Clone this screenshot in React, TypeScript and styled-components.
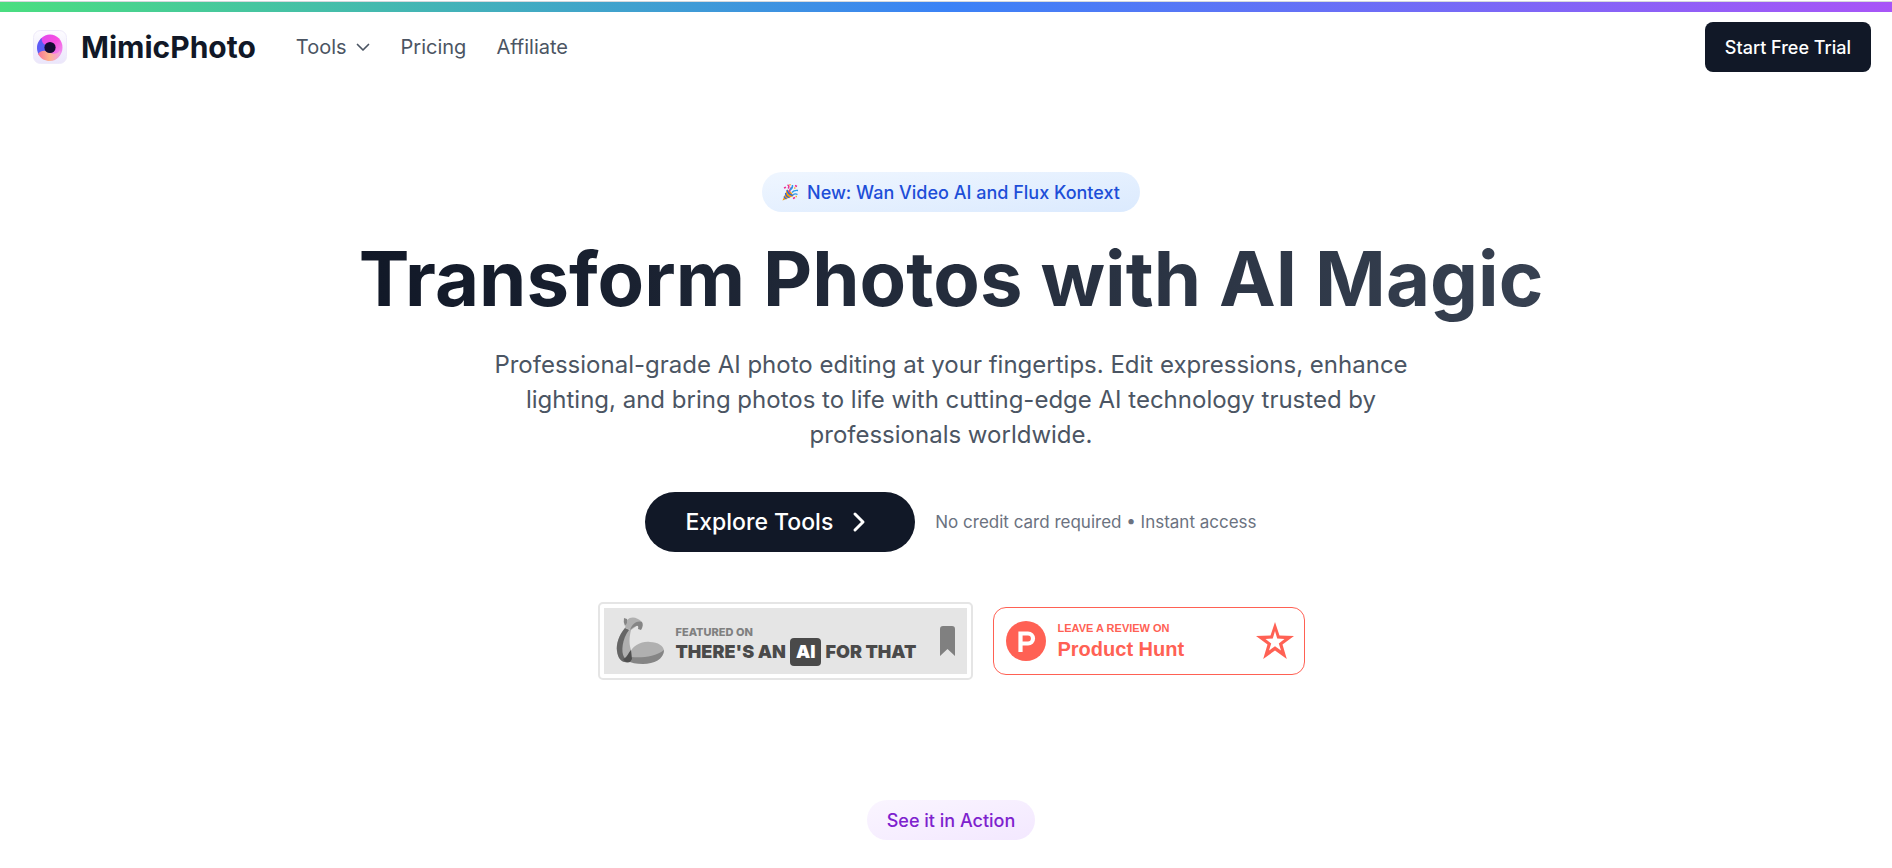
import React from 'react';
import styled, { createGlobalStyle } from 'styled-components';

const GlobalStyle = createGlobalStyle`
  *, *::before, *::after { box-sizing: border-box; }
  body {
    margin: 0;
    background: #ffffff;
    color: #111827;
    font-family: Inter, "Liberation Sans", sans-serif;
    overflow-x: hidden;
  }
  a { color: inherit; text-decoration: none; }
  h1, p { margin: 0; }
  button { font: inherit; border: 0; cursor: pointer; }
`;

const AccentBar = styled.div`
  height: 12px;
  border-top: 1px solid #ffffff;
  background: linear-gradient(to right, #4ade80, #3b82f6, #a855f7);
  box-shadow: inset 0 1px 0 #d5d8dc;
`;

const Header = styled.header`
  display: flex;
  align-items: center;
  justify-content: space-between;
  height: 70px;
  padding: 0 21px 0 33px;
`;

const HeaderLeft = styled.div`
  display: flex;
  align-items: center;
  gap: 40px;
`;

const Brand = styled.a`
  display: flex;
  align-items: center;
  gap: 14px;
  font-size: 30px;
  line-height: 40px;
  font-weight: 700;
`;

const Nav = styled.nav`
  display: flex;
  align-items: center;
  gap: 30px;
  color: #4b5563;
  font-size: 20px;
  line-height: 28px;
`;

const NavButton = styled.button`
  display: flex;
  align-items: center;
  gap: 8px;
  padding: 0;
  background: none;
  color: inherit;
`;

const TrialButton = styled.button`
  height: 50px;
  padding: 0 20px;
  border-radius: 8px;
  background: #111827;
  color: #ffffff;
  font-size: 18px;
  font-weight: 500;
`;

const Main = styled.main`
  display: flex;
  flex-direction: column;
  align-items: center;
  padding: 90px 24px 28px 34px;
`;

const Pill = styled.div<{ $tone: 'blue' | 'purple' }>`
  display: flex;
  align-items: center;
  gap: 8px;
  height: 40px;
  padding: 0 20px;
  border-radius: 20px;
  font-size: 18px;
  font-weight: 500;
  white-space: nowrap;
  color: ${p => (p.$tone === 'blue' ? '#1d4ed8' : '#7e22ce')};
  background: ${p =>
    p.$tone === 'blue'
      ? 'linear-gradient(to right bottom, #eff6ff, #dbeafe)'
      : 'linear-gradient(to right bottom, #faf5ff, #f3e8ff)'};
`;

const Title = styled.h1`
  margin-top: 21px;
  padding-bottom: 6px;
  font-size: 76px;
  line-height: 90px;
  font-weight: 700;
  text-align: center;
  background: linear-gradient(to right, #111827, #374151);
  background-clip: text;
  -webkit-background-clip: text;
  color: transparent;
`;

const Lead = styled.p`
  max-width: 960px;
  margin-top: 18px;
  color: #4b5563;
  font-size: 24px;
  line-height: 35px;
  text-align: center;
`;

const Actions = styled.div`
  display: flex;
  align-items: center;
  gap: 20px;
  margin-top: 40px;
`;

const ExploreButton = styled.button`
  display: flex;
  align-items: center;
  gap: 12px;
  height: 60px;
  padding: 0 40px;
  border-radius: 30px;
  background: #111827;
  color: #ffffff;
  font-size: 23px;
  font-weight: 500;
`;

const Note = styled.span`
  color: #6b7280;
  font-size: 17px;
`;

const Badges = styled.div`
  display: flex;
  align-items: center;
  gap: 20px;
  margin: 50px 0 120px;
`;

const FeaturedBadge = styled.a`
  display: flex;
  width: 375px;
  height: 78px;
  padding: 4px;
  border: 2px solid #e5e5e5;
  border-radius: 5px;
`;

const FeaturedInner = styled.span`
  display: flex;
  align-items: center;
  flex: 1;
  padding: 0 12px;
  background: #e5e5e5;
`;

const BadgeText = styled.span`
  display: flex;
  flex-direction: column;
  flex: 1;
  margin-left: 12px;
  white-space: nowrap;
`;

const FeaturedSmall = styled.span`
  padding-top: 10px;
  color: #808080;
  font-size: 11px;
  line-height: 12px;
  font-weight: 800;
`;

const FeaturedLarge = styled.span`
  display: flex;
  align-items: center;
  gap: 4px;
  color: #4a4a4a;
  font-size: 18px;
  line-height: 28px;
  font-weight: 900;
`;

const AiChip = styled.span`
  padding: 0 6px;
  border-radius: 4px;
  background: #4a4a4a;
  color: #ffffff;
`;

const HuntBadge = styled.a`
  display: flex;
  align-items: center;
  width: 312px;
  height: 68px;
  padding: 0 10px 0 12px;
  border: 1px solid #ff6154;
  border-radius: 13px;
  color: #ff6154;
  font-family: "Liberation Sans", Arial, sans-serif;
  font-weight: 700;
`;

const HuntSmall = styled.span`
  padding-top: 2px;
  font-size: 11px;
  line-height: 14px;
`;

const HuntLarge = styled.span`
  font-size: 20px;
  line-height: 28px;
`;

const Logo = () => (
  <svg width="34" height="34" viewBox="0 0 34 34" aria-hidden="true">
    <defs>
      <linearGradient id="tile" x1="0" y1="0" x2="0" y2="1">
        <stop offset="0" stopColor="#fdfcff" />
        <stop offset="1" stopColor="#ebe6fb" />
      </linearGradient>
      <linearGradient id="ring" x1="0" y1="0" x2="1" y2="1">
        <stop offset="0" stopColor="#d946ef" />
        <stop offset="0.5" stopColor="#f94fe0" />
        <stop offset="1" stopColor="#e9a8f5" />
      </linearGradient>
      <linearGradient id="warm" x1="0" y1="0" x2="1" y2="0">
        <stop offset="0" stopColor="#f9739b" />
        <stop offset="0.5" stopColor="#fdb48c" />
        <stop offset="1" stopColor="#f3a0e6" />
      </linearGradient>
    </defs>
    <rect x="0.5" y="0.5" width="33" height="33" rx="7" fill="url(#tile)" stroke="#eeeafa" />
    <ellipse cx="17" cy="17.500" rx="12.500" ry="13" fill="url(#ring)" />
    <path d="M9 8C3 12 3 20 6 25C9 24 12 22 17 23L13 15C10 14 8 11 9 8Z" fill="#5b5cf6" />
    <path d="M5 24C8 20 13 20 17 23C22 25 26 23 27 20C29 26 23 31 17 31C12 31 8 29 5 24Z" fill="url(#warm)" />
    <circle cx="17" cy="17.500" r="5.600" fill="#150c33" />
  </svg>
);

const Party = () => (
  <svg width="17" height="17" viewBox="0 0 17 17" aria-hidden="true">
    <path d="M5 5.500L0.500 16.500L11.500 12Q10 7.500 5 5.500Z" fill="#f59e0b" />
    <path d="M3.500 9Q4 13 7.500 13.600M2 12.500Q3 14.500 4.500 15M5 6Q6 10 10.800 11.600" fill="none" stroke="#2563eb" strokeWidth="1.300" />
    <path d="M2 4L4 3.200M6 4.500Q8 2 5.500 1M7.500 8Q8 4 10 3.500M13 1.500L15 2.500M11 14.500L13 13.500" fill="none" stroke="#ec2f92" strokeWidth="1.500" />
    <path d="M8 6Q11 4 10.500 1M10 8.500Q12 6 16 6.500M11 11Q13 9 15.500 10.500" fill="none" stroke="#2c9be8" strokeWidth="1.400" />
    <path d="M12 4H13.500M13.500 12.500H15M8 0V1.500" stroke="#fbb034" strokeWidth="1.400" />
  </svg>
);

const Arm = () => (
  <svg width="48" height="48" viewBox="0 0 48 48" aria-hidden="true">
    <path d="M9 11C3 18 0 27 1 34C2 42 6 46 12 45L15 40L15 33C13 27 13 21 15 13Z" fill="#b0b0b0" />
    <path d="M9 11C3 18 0 27 1 34C2 42 6 46 12 45L8 40C5 35 6 22 13 13Z" fill="#666666" />
    <path d="M14 36C17 28 26 24 34 25C42 25 48 29 48 34C47 39 38 42 28 42C22 42 17 42 14 42Z" fill="#b0b0b0" />
    <path d="M15 40C26 41 39 40 48 33C48 42 38 47 27 47C20 47 15 46 12 44Z" fill="#858585" />
    <path d="M15 33L16 42L14 45C11 46 9 45 7 42C11 41 12 36 15 33Z" fill="#4f4f4f" />
    <path d="M9 11L11 3C15 -1 21 0 26 5L22 8L15 13Z" fill="#b0b0b0" />
    <path d="M8 1L11 2L11 6L9 9Q7 5 8 1ZM14 13C16 6 22 3 26 5Q28 8 25 13L22 12Q23 8 20 9Q17 10 14 13Z" fill="#858585" />
  </svg>
);

export default function App() {
  return (
    <>
      <GlobalStyle />
      <AccentBar />
      <Header>
        <HeaderLeft>
          <Brand href="#home">
            <Logo />
            MimicPhoto
          </Brand>
          <Nav aria-label="Main">
            <NavButton type="button">
              Tools
              <svg width="16" height="16" viewBox="0 0 16 16" fill="none" stroke="currentColor" strokeWidth="1.700" strokeLinecap="round" strokeLinejoin="round" aria-hidden="true">
                <path d="M2.500 5.500L8 11L13.500 5.500" />
              </svg>
            </NavButton>
            <a href="#pricing">Pricing</a>
            <a href="#affiliate">Affiliate</a>
          </Nav>
        </HeaderLeft>
        <TrialButton type="button">Start Free Trial</TrialButton>
      </Header>
      <Main>
        <Pill $tone="blue">
          <Party />
          New: Wan Video AI and Flux Kontext
        </Pill>
        <Title>Transform Photos with AI Magic</Title>
        <Lead>
          Professional-grade AI photo editing at your fingertips. Edit expressions, enhance
          lighting, and bring photos to life with cutting-edge AI technology trusted by
          professionals worldwide.
        </Lead>
        <Actions>
          <ExploreButton type="button">
            Explore Tools
            <svg width="30" height="26" viewBox="0 0 30 26" fill="none" stroke="currentColor" strokeWidth="3" strokeLinecap="round" strokeLinejoin="round" aria-hidden="true">
              <path d="M10 5L18 13L10 21" />
            </svg>
          </ExploreButton>
          <Note>No credit card required • Instant access</Note>
        </Actions>
        <Badges>
          <FeaturedBadge href="#featured">
            <FeaturedInner>
              <Arm />
              <BadgeText>
                <FeaturedSmall>FEATURED ON</FeaturedSmall>
                <FeaturedLarge>
                  THERE'S AN <AiChip>AI</AiChip> FOR THAT
                </FeaturedLarge>
              </BadgeText>
              <svg width="15" height="30" viewBox="0 0 15 30" aria-hidden="true">
                <path d="M0 3Q0 0 3 0H12Q15 0 15 3V30L7.500 23L0 30Z" fill="#808080" />
              </svg>
            </FeaturedInner>
          </FeaturedBadge>
          <HuntBadge href="#reviews">
            <svg width="40" height="40" viewBox="0 0 40 40" aria-hidden="true">
              <circle cx="20" cy="20" r="20" fill="#ff6154" />
              <path d="M14.500 31V12.500H22A5 5 0 0 1 22 22.500H14.500" fill="none" stroke="#ffffff" strokeWidth="4.200" />
            </svg>
            <BadgeText>
              <HuntSmall>LEAVE A REVIEW ON</HuntSmall>
              <HuntLarge>Product Hunt</HuntLarge>
            </BadgeText>
            <svg width="38" height="38" viewBox="0 0 38 38" aria-hidden="true">
              <path fill="#ff6154" fillRule="evenodd" d="M19 0L23.500 13.500L38 14L26.500 22.500L30.800 37L19 28.500L7.200 37L11.500 22.500L0 14L14.500 13.500ZM19 9L16.800 16.500L9.500 17L15.200 21.500L13 28.500L19 24.300L25 28.500L22.800 21.500L28.500 17L21.200 16.500Z" />
            </svg>
          </HuntBadge>
        </Badges>
        <Pill $tone="purple">See it in Action</Pill>
      </Main>
    </>
  );
}
